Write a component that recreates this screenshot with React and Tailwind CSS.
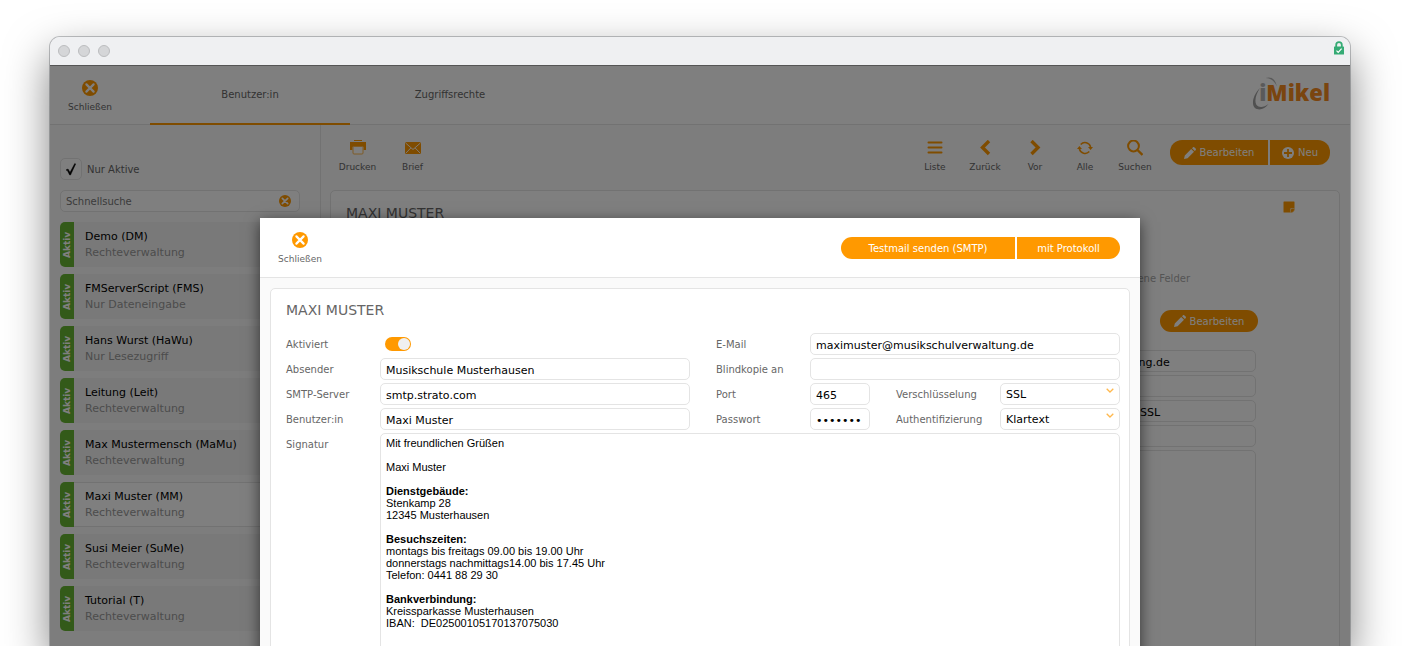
import { useState } from 'react';

const users = [
  { name: 'Demo (DM)', role: 'Rechteverwaltung' },
  { name: 'FMServerScript (FMS)', role: 'Nur Dateneingabe' },
  { name: 'Hans Wurst (HaWu)', role: 'Nur Lesezugriff' },
  { name: 'Leitung (Leit)', role: 'Rechteverwaltung' },
  { name: 'Max Mustermensch (MaMu)', role: 'Rechteverwaltung' },
  { name: 'Maxi Muster (MM)', role: 'Rechteverwaltung', selected: true },
  { name: 'Susi Meier (SuMe)', role: 'Rechteverwaltung' },
  { name: 'Tutorial (T)', role: 'Rechteverwaltung' },
];

const fieldClass =
  'h-[22px] w-full min-w-0 rounded-[5px] border border-[#e4e4e4] bg-white px-[5px] pt-0.5 text-[11px] text-black outline-none';

function CloseIcon({ className = 'size-4' }) {
  return (
    <svg viewBox="0 0 16 16" className={className}>
      <circle cx="8" cy="8" r="8" fill="#ff9900" />
      <path d="M4.4 4.4l7.200 7.200M11.600 4.400l-7.200 7.200" stroke="#fff" strokeWidth="2.200" strokeLinecap="round" />
    </svg>
  );
}

function PrintIcon() {
  return (
    <svg viewBox="0 0 16 16" className="size-4">
      <path d="M4 0h8v1H4zM0 2h16v8h-2.500V7h-11v3H0z" fill="#ff9900" />
      <path d="M3 6.500h10V13a1 1 0 0 1-1 1H4a1 1 0 0 1-1-1z" fill="#fff" stroke="#ffb84d" />
    </svg>
  );
}

function MailIcon() {
  return (
    <svg viewBox="0 0 16 16" className="size-4">
      <rect y="2" width="16" height="12" rx="1.500" fill="#ff9900" />
      <path d="M.8 3.200L8 9.500l7.200-6.300M1 13l4.800-5M15 13l-4.800-5" fill="none" stroke="#fff" strokeWidth=".9" />
    </svg>
  );
}

function ListIcon() {
  return (
    <svg viewBox="0 0 16 16" className="size-4">
      <path d="M1.500 2.500h13M1.500 7.500h13M1.500 12.500h13" stroke="#ff9900" strokeWidth="2" strokeLinecap="round" />
    </svg>
  );
}

function PrevIcon() {
  return (
    <svg viewBox="0 0 16 16" className="size-4">
      <path d="M12 1L5.500 7.500 12 14" fill="none" stroke="#ff9900" strokeWidth="3.400" />
    </svg>
  );
}

function NextIcon() {
  return (
    <svg viewBox="0 0 16 16" className="size-4">
      <path d="M4.500 1L11 7.500 4.500 14" fill="none" stroke="#ff9900" strokeWidth="3.400" />
    </svg>
  );
}

function RefreshIcon() {
  return (
    <svg viewBox="0 0 16 16" className="size-4">
      <path d="M3.700 4.500A5.800 5.800 0 0 1 13.600 7M12.300 11.500A5.800 5.800 0 0 1 2.400 9" fill="none" stroke="#ff9900" strokeWidth="1.500" />
      <path d="M0 9L2.400 6 5 9zM11 7h5l-2.400 3z" fill="#ff9900" />
    </svg>
  );
}

function SearchIcon() {
  return (
    <svg viewBox="0 0 16 16" className="size-4">
      <circle cx="6.500" cy="6" r="5.400" fill="none" stroke="#ff9900" strokeWidth="2" />
      <path d="M10.500 10l5 5" stroke="#ff9900" strokeWidth="2.400" />
    </svg>
  );
}

function PencilIcon() {
  return (
    <svg viewBox="0 0 12 12" className="size-3">
      <path d="M0 12l.8-3.600L7.200 2l2.800 2.800-6.400 6.400zM8 1.200L8.800.4a1.200 1.200 0 0 1 1.700 0l1.100 1.100a1.200 1.200 0 0 1 0 1.700L10.800 4z" fill="#fff" />
    </svg>
  );
}

function PlusIcon() {
  return (
    <svg viewBox="0 0 12 12" className="size-3">
      <circle cx="6" cy="6" r="6" fill="#fff" />
      <path d="M6 2v8M2 6h8" stroke="#ff9900" strokeWidth="1.800" />
    </svg>
  );
}

function NoteIcon() {
  return (
    <svg viewBox="0 0 12 12" className="size-3">
      <path d="M1 .5h10a.5.5 0 0 1 .5.5v6H9a2 2 0 0 0-2 2v2.500H1a.5.5 0 0 1-.5-.5V1A.5.5 0 0 1 1 .5z" fill="#ff9900" />
      <path d="M7.500 11.500V9.300a1.800 1.800 0 0 1 1.800-1.800h2.200c0 2.500-1.500 4-4 4z" fill="#ff9900" stroke="#ffc266" strokeWidth=".6" />
    </svg>
  );
}

function LockIcon() {
  return (
    <svg viewBox="0 0 10 14" className="h-3.5 w-2.5">
      <path d="M2.200 6.500V4a2.800 2.800 0 0 1 5.600 0v2.500" fill="none" stroke="#35ab75" strokeWidth="1.800" />
      <rect y="5.500" width="10" height="8" rx=".6" fill="#35ab75" />
      <path d="M2.500 9.600l1.700 1.700 3.400-3.600" fill="none" stroke="#fff" strokeWidth="1.200" />
    </svg>
  );
}

function Logo() {
  return (
    <div className="relative flex h-8 items-center pl-[7px]">
      <svg viewBox="0 0 28 34" className="absolute left-0 top-0 h-[34px] w-7">
        <path d="M13.500 2C19 .2 23.500 3 24.800 10.500 22.500 4.500 18.500 2.300 13.500 2z" fill="#b5b5b5" />
        <path d="M8 12C1 19-1 28 3 32c4 3 10 1 13.500-4C12 31.500 7 32 4.500 29 2 25 4 18 8 12z" fill="#a0a0a0" />
      </svg>
      <span className="relative font-['Open_Sans',sans-serif] text-[22px] font-extrabold leading-8 text-[#f58a1f]">
        <span className="text-[#b5b5b5]">i</span>Mikel
      </span>
    </div>
  );
}

function ToolButton({ icon, label, className = 'w-[50px]' }) {
  return (
    <button type="button" className={`flex flex-col items-center gap-[3px] text-[9px] leading-4 text-[#666] ${className}`}>
      {icon}
      {label}
    </button>
  );
}

function EditButton({ className }) {
  return (
    <button type="button" className={`flex w-[98px] items-center justify-center gap-1 bg-[#ff9900] text-[10px] text-white ${className}`}>
      <PencilIcon />
      Bearbeiten
    </button>
  );
}

function Row({ id, label, children }) {
  return (
    <div className="flex items-center">
      <label htmlFor={id} className="w-[94px] shrink-0 text-[10px] text-[#666]">{label}</label>
      {children}
    </div>
  );
}

function SelectField({ id, label, options }) {
  return (
    <div className="ml-[26px] flex flex-1 items-center">
      <label htmlFor={id} className="w-[104px] shrink-0 text-[10px] text-[#666]">{label}</label>
      <div className="relative flex-1">
        <select id={id} className={`${fieldClass} block appearance-none`}>
          {options.map((option) => (
            <option key={option}>{option}</option>
          ))}
        </select>
        <svg viewBox="0 0 8 5" className="pointer-events-none absolute right-1.5 top-[5px] h-[5px] w-2">
          <path d="M.7.700L4 4 7.300.700" fill="none" stroke="#ffb84d" strokeWidth="1.300" />
        </svg>
      </div>
    </div>
  );
}

function Sidebar() {
  const [onlyActive, setOnlyActive] = useState(true);

  return (
    <aside className="w-[271px] shrink-0 border-r border-[#e4e4e4] bg-[#fafafa] pl-2.5 pr-5 pt-[33px]">
      <div className="flex items-center">
        <div className="grid">
          <input
            id="only-active"
            type="checkbox"
            checked={onlyActive}
            onChange={(e) => setOnlyActive(e.target.checked)}
            className="col-start-1 row-start-1 size-[22px] appearance-none rounded-[5px] border border-[#e4e4e4] bg-white"
          />
          {onlyActive && (
            <svg viewBox="0 0 22 22" className="pointer-events-none col-start-1 row-start-1 size-[22px]">
              <path d="M6 12l2-1 2 3.500L14.800 5.500 15.600 6l-5.100 11H9.700L7.400 12.500z" fill="#000" stroke="#000" strokeWidth=".5" />
            </svg>
          )}
        </div>
        <label htmlFor="only-active" className="pl-[5px] text-[10px] text-[#666]">Nur Aktive</label>
      </div>

      <div className="relative mt-2.5">
        <input
          type="text"
          aria-label="Schnellsuche"
          placeholder="Schnellsuche"
          className="block h-[22px] w-full rounded-[5px] border border-[#e4e4e4] bg-white px-[5px] text-[10px] outline-none placeholder:text-[#777]"
        />
        <button type="button" aria-label="Suche leeren" className="absolute right-[9px] top-[5px]">
          <CloseIcon className="size-3" />
        </button>
      </div>

      <ul className="mt-2.5 flex flex-col gap-[7px]">
        {users.map((user) => (
          <li key={user.name} className="flex h-[45px]">
            <span className="w-3.5 rotate-180 rounded-r-[5px] bg-[#67b432] text-center text-[9px] font-bold leading-3.5 text-white [writing-mode:vertical-rl]">
              Aktiv
            </span>
            <button
              type="button"
              className={`flex-1 pl-[11px] text-left text-[11px] leading-4 ${
                user.selected ? 'border-y border-[#e4e4e4] bg-white' : 'bg-[#f3f3f3]'
              }`}
            >
              <span className="block text-black">{user.name}</span>
              <span className="block text-[#999]">{user.role}</span>
            </button>
          </li>
        ))}
      </ul>
    </aside>
  );
}

function Main() {
  return (
    <main className="flex flex-1 flex-col bg-[#fafafa] px-[9px]">
      <div className="flex h-[65px] shrink-0 items-start pr-[11px] pt-[15px]">
        <ToolButton icon={<PrintIcon />} label="Drucken" className="w-[55px]" />
        <ToolButton icon={<MailIcon />} label="Brief" className="w-[55px]" />
        <div className="ml-auto flex pr-2.5">
          <ToolButton icon={<ListIcon />} label="Liste" />
          <ToolButton icon={<PrevIcon />} label="Zurück" />
          <ToolButton icon={<NextIcon />} label="Vor" />
          <ToolButton icon={<RefreshIcon />} label="Alle" />
          <ToolButton icon={<SearchIcon />} label="Suchen" />
        </div>
        <div className="flex gap-0.5">
          <EditButton className="h-[25px] rounded-l-[12px]" />
          <button type="button" className="flex h-[25px] w-[60px] items-center justify-center gap-1 rounded-r-[12px] bg-[#ff9900] text-[10px] text-white">
            <PlusIcon />
            Neu
          </button>
        </div>
      </div>

      <section className="mr-[1px] flex-1 rounded-t-[5px] border border-[#e4e4e4] bg-white px-[15px]">
        <div className="flex h-20 items-start justify-between pr-[29px] pt-2.5">
          <h2 className="text-[14px] leading-6 text-[#666]">MAXI MUSTER</h2>
          <NoteIcon />
        </div>
        <div className="ml-auto mr-[68px] w-[310px]">
          <p className="pr-[66px] text-right text-[10px] leading-4 text-[#aaa]">Eigene Felder</p>
          <div className="mt-[23px] flex justify-end">
            <EditButton className="-mr-[2px] h-[22px] rounded-[11px]" />
          </div>
          <div className="mt-[18px] flex flex-col gap-[3px]">
            <input readOnly aria-label="E-Mail" value="maximuster@musikschulverwaltung.de" className={fieldClass} />
            <input readOnly aria-label="Blindkopie an" value="" className={fieldClass} />
            <input readOnly aria-label="Verschlüsselung" value="SSL" className={`${fieldClass} max-w-[122px] self-end`} />
            <input readOnly aria-label="Authentifizierung" value="" className={fieldClass} />
            <textarea readOnly aria-label="Signatur" className="h-[420px] resize-none rounded-[5px] border border-[#e4e4e4] outline-none" />
          </div>
        </div>
      </section>
    </main>
  );
}

function Signature() {
  return (
    <div
      id="signature"
      role="textbox"
      aria-multiline="true"
      aria-labelledby="signature-label"
      contentEditable
      suppressContentEditableWarning
      className="h-[400px] flex-1 whitespace-pre-wrap rounded-[5px] border border-[#e4e4e4] px-[5px] py-[3px] font-['Liberation_Sans',sans-serif] text-[11px] leading-3 text-black outline-none"
    >
      Mit freundlichen Grüßen{'\n\n'}
      Maxi Muster{'\n\n'}
      <b>Dienstgebäude:</b>{'\n'}
      Stenkamp 28{'\n'}
      12345 Musterhausen{'\n\n'}
      <b>Besuchszeiten:</b>{'\n'}
      montags bis freitags 09.00 bis 19.00 Uhr{'\n'}
      donnerstags nachmittags14.00 bis 17.45 Uhr{'\n'}
      Telefon: 0441 88 29 30{'\n\n'}
      <b>Bankverbindung:</b>{'\n'}
      Kreissparkasse Musterhausen{'\n'}
      {'IBAN:  DE02500105170137075030'}
    </div>
  );
}

function MailDialog() {
  const [enabled, setEnabled] = useState(true);

  return (
    <div role="dialog" aria-label="E-Mail-Einstellungen" className="w-[880px] bg-[#fafafa] shadow-[0_4px_14px_rgba(0,0,0,0.6)]">
      <header className="flex h-[60px] items-start justify-between border-b border-[#e4e4e4] bg-white pr-5">
        <ToolButton icon={<CloseIcon />} label="Schließen" className="w-20 pt-3.5" />
        <div className="mt-[19px] flex gap-0.5 text-[10px] text-white">
          <button type="button" className="h-[22px] w-[174px] rounded-l-[11px] bg-[#ff9900]">Testmail senden (SMTP)</button>
          <button type="button" className="h-[22px] w-[103px] rounded-r-[11px] bg-[#ff9900]">mit Protokoll</button>
        </div>
      </header>

      <section className="mx-2.5 mt-2.5 rounded-[5px] border border-[#e4e4e4] bg-white pb-4 pl-[15px] pr-[9px] pt-[9px]">
        <h1 className="text-[14px] leading-6 text-[#666]">MAXI MUSTER</h1>
        <form className="mt-[11px] flex flex-col gap-[3px]" onSubmit={(e) => e.preventDefault()}>
          <div className="flex gap-[26px]">
            <div className="flex flex-1 flex-col gap-[3px]">
              <Row id="enabled" label="Aktiviert">
                <div className="flex h-[22px] items-center pl-[5px]">
                  <input
                    id="enabled"
                    type="checkbox"
                    role="switch"
                    checked={enabled}
                    onChange={(e) => setEnabled(e.target.checked)}
                    className="flex h-3.5 w-[26px] appearance-none items-center rounded-full bg-gray-300 px-px before:size-3 before:rounded-full before:bg-[#f0f0f0] checked:justify-end checked:bg-[#ff9900]"
                  />
                </div>
              </Row>
              <Row id="sender" label="Absender">
                <input id="sender" defaultValue="Musikschule Musterhausen" className={fieldClass} />
              </Row>
              <Row id="server" label="SMTP-Server">
                <input id="server" defaultValue="smtp.strato.com" className={fieldClass} />
              </Row>
              <Row id="username" label="Benutzer:in">
                <input id="username" defaultValue="Maxi Muster" className={fieldClass} />
              </Row>
            </div>

            <div className="flex flex-1 flex-col gap-[3px]">
              <Row id="email" label="E-Mail">
                <input id="email" defaultValue="maximuster@musikschulverwaltung.de" className={fieldClass} />
              </Row>
              <Row id="bcc" label="Blindkopie an">
                <input id="bcc" className={fieldClass} />
              </Row>
              <Row id="port" label="Port">
                <input id="port" defaultValue="465" className={`${fieldClass} max-w-[60px]`} />
                <SelectField id="encryption" label="Verschlüsselung" options={['SSL', 'TLS']} />
              </Row>
              <Row id="password" label="Passwort">
                <input id="password" type="password" defaultValue="passwor" className={`${fieldClass} max-w-[60px]`} />
                <SelectField id="auth" label="Authentifizierung" options={['Klartext', 'CRAM-MD5']} />
              </Row>
            </div>
          </div>

          <div className="flex items-start">
            <span id="signature-label" className="w-[94px] shrink-0 text-[10px] leading-6 text-[#666]">Signatur</span>
            <Signature />
          </div>
        </form>
      </section>
    </div>
  );
}

export default function App() {
  return (
    <div className="h-screen overflow-hidden bg-white pl-[50px] pr-14 pt-[37px] font-['DejaVu_Sans',sans-serif]">
      <div className="flex h-full flex-col rounded-t-[10px] shadow-[0_18px_44px_rgba(0,0,0,0.5),0_0_0_1px_#c4c6c8]">
        <div className="flex h-7 shrink-0 items-center gap-2 rounded-t-[10px] bg-[#eff0f2] pl-2 pr-1.5">
          <span className="size-3 rounded-full border border-[#bcbdbf] bg-[#d5d6d8]" />
          <span className="size-3 rounded-full border border-[#bcbdbf] bg-[#d5d6d8]" />
          <span className="size-3 rounded-full border border-[#bcbdbf] bg-[#d5d6d8]" />
          <span className="mb-1.5 ml-auto"><LockIcon /></span>
        </div>

        <div className="relative flex min-h-0 flex-1 flex-col overflow-hidden border-t border-[#555]">
          <header className="flex h-[59px] shrink-0 items-start border-b border-[#e4e4e4] bg-white pr-5">
            <ToolButton icon={<CloseIcon />} label="Schließen" className="w-20 pt-3.5" />
            <nav className="ml-5 flex text-[10px] text-[#666]">
              <a href="#benutzer" className="flex h-[59px] w-[200px] items-center justify-center border-b-2 border-[#ff9900]">Benutzer:in</a>
              <a href="#rechte" className="flex h-[59px] w-[200px] items-center justify-center border-b-2 border-transparent">Zugriffsrechte</a>
            </nav>
            <div className="ml-auto mt-2.5"><Logo /></div>
          </header>

          <div className="flex min-h-0 flex-1">
            <Sidebar />
            <Main />
          </div>

          <div className="absolute inset-0 flex items-start justify-center overflow-hidden bg-black/50 pt-[152px]">
            <MailDialog />
          </div>
        </div>
      </div>
    </div>
  );
}
